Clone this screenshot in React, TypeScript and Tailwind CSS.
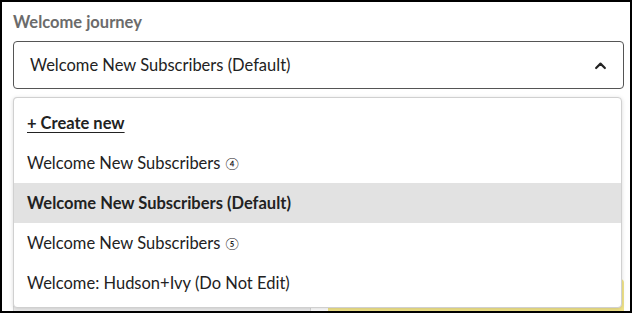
import React from "react";

const items = [
  { label: "Welcome New Subscribers", mark: "④", active: false },
  { label: "Welcome New Subscribers (Default)", mark: "", active: true },
  { label: "Welcome New Subscribers", mark: "⑤", active: false },
  { label: "Welcome: Hudson+Ivy (Do Not Edit)", mark: "", active: false },
];

function ChevronUp() {
  return (
    <svg width="15" height="15" viewBox="0 0 24 24" fill="none">
      <path d="M5 16l7-7 7 7" stroke="#222" strokeWidth="3.4" strokeLinecap="round" strokeLinejoin="round" />
    </svg>
  );
}

export default function App() {
  return (
    <div className="w-[632px] h-[313px] overflow-hidden border-2 border-black bg-white" style={{ fontFamily: "Lato, 'Noto Sans', sans-serif" }}>
      <div className="relative pl-[11px] pr-[6px] pt-[10px]">
        <p className="text-[16.5px] font-bold text-[#6b6b6b] leading-[20px]">Welcome journey</p>
        <div className="mt-[9px] h-[48px] rounded-[4px] border border-[#555] flex items-center justify-between pl-[16px] pr-[15px]">
          <span className="text-[16.5px] text-[#222]">Welcome New Subscribers (Default)</span>
          <ChevronUp />
        </div>

        {/* content under the open menu */}
        <div className="mt-[8px] flex gap-[17px]">
          <div className="flex-1 h-[220px] rounded-[4px] border border-[#d8d8d8] bg-[#ececec]" />
          <div className="flex-1 flex flex-col justify-end h-[220px]">
            <div className="h-[38px] rounded-[4px] bg-[#f1e48a]" />
          </div>
        </div>

        <div className="absolute left-[11px] right-[8px] top-[95px] h-[211px] rounded-[4px] border border-[#d0d0d0] bg-white shadow-[0_1px_4px_rgba(0,0,0,0.15)] pt-[5px]">
          <div className="h-[40px] flex items-center px-[13px]">
            <span className="text-[16.5px] font-bold text-[#222] underline underline-offset-[3px]">+ Create new</span>
          </div>
          {items.map((it, i) => (
            <div
              key={i}
              className={`h-[40px] flex items-center px-[13px] ${it.active ? "bg-[#e2e2e2]" : ""}`}
            >
              <span className={`text-[16.5px] text-[#222] ${it.active ? "font-bold" : ""}`}>
                {it.label}
                {it.mark && <span className="ml-[5px] text-[12px] align-[1px]">{it.mark}</span>}
              </span>
            </div>
          ))}
        </div>
      </div>
    </div>
  );
}
